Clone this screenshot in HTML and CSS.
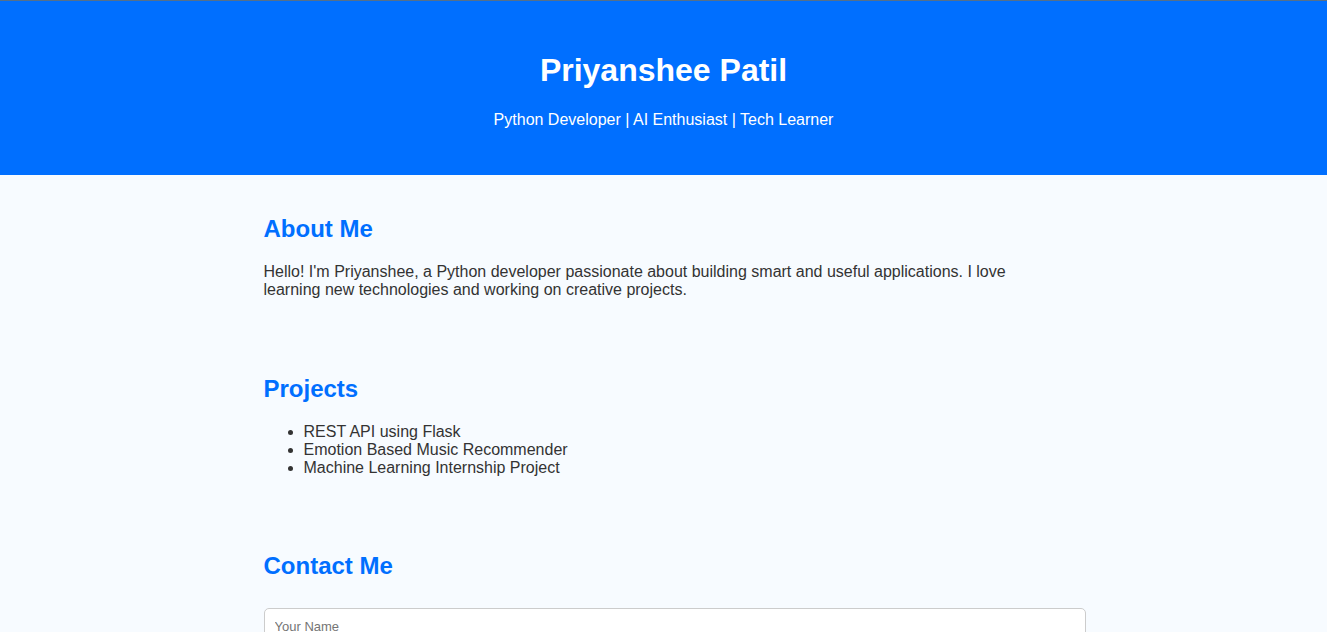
FILE: index.html
```html
<!DOCTYPE html>
<html lang="en">
<head>
<meta charset="UTF-8">
<title>Priyanshee Patil</title>
<link rel="stylesheet" href="styles.css">
</head>
<body>
<header class="hero">
  <h1 class="hero-name">Priyanshee Patil</h1>
  <p class="hero-tagline">Python Developer | AI Enthusiast | Tech Learner</p>
</header>
<main class="container">
  <section class="section">
    <h2 class="section-title">About Me</h2>
    <p class="section-text">Hello! I'm Priyanshee, a Python developer passionate about building smart and useful applications. I love learning new technologies and working on creative projects.</p>
  </section>
  <section class="section">
    <h2 class="section-title">Projects</h2>
    <ul class="project-list">
      <li>REST API using Flask</li>
      <li>Emotion Based Music Recommender</li>
      <li>Machine Learning Internship Project</li>
    </ul>
  </section>
  <section class="section section-contact">
    <h2 class="section-title">Contact Me</h2>
    <form class="contact-form">
      <input class="field" type="text" placeholder="Your Name">
      <input class="field" type="email" placeholder="Your Email">
      <textarea class="field" placeholder="Your Message"></textarea>
      <button class="send" type="button">Send</button>
    </form>
  </section>
</main>
</body>
</html>
```
FILE: styles.css
```css
body {
  margin: 0;
  font-family: "Liberation Sans", Arial, sans-serif;
  background: #f7fbff;
  color: #333;
}
.hero {
  background: #006fff;
  color: #fff;
  text-align: center;
  padding: 30px 20px 30px;
  border-top: 1px solid #56708a;
}
.hero-name {
  font-size: 32px;
  margin: 21px 0 22px;
}
.hero-tagline {
  font-size: 16px;
  margin: 16px 0;
}
.container {
  width: 800px;
  margin: 0 auto;
}
.section {
  padding: 20px 0;
}
.section-contact {
  padding-top: 19px;
}
.section-title {
  color: #006fff;
  font-size: 24px;
  margin: 20px 0;
}
.section-text {
  font-size: 16px;
  margin: 16px 0;
}
.project-list {
  margin: 16px 0;
  padding-left: 40px;
}
.contact-form {
  padding-top: 8px;
}
.field {
  display: block;
  width: 100%;
  padding: 10px;
  margin: 0 0 10px;
  border: 1px solid #ccc;
  border-radius: 5px;
  font-family: "Liberation Sans", Arial, sans-serif;
  font-size: 13px;
  background: #fff;
}
.field::placeholder {
  color: #757575;
}
.send {
  background: #006fff;
  color: #fff;
  border: none;
  padding: 10px 20px;
  border-radius: 5px;
}
```
